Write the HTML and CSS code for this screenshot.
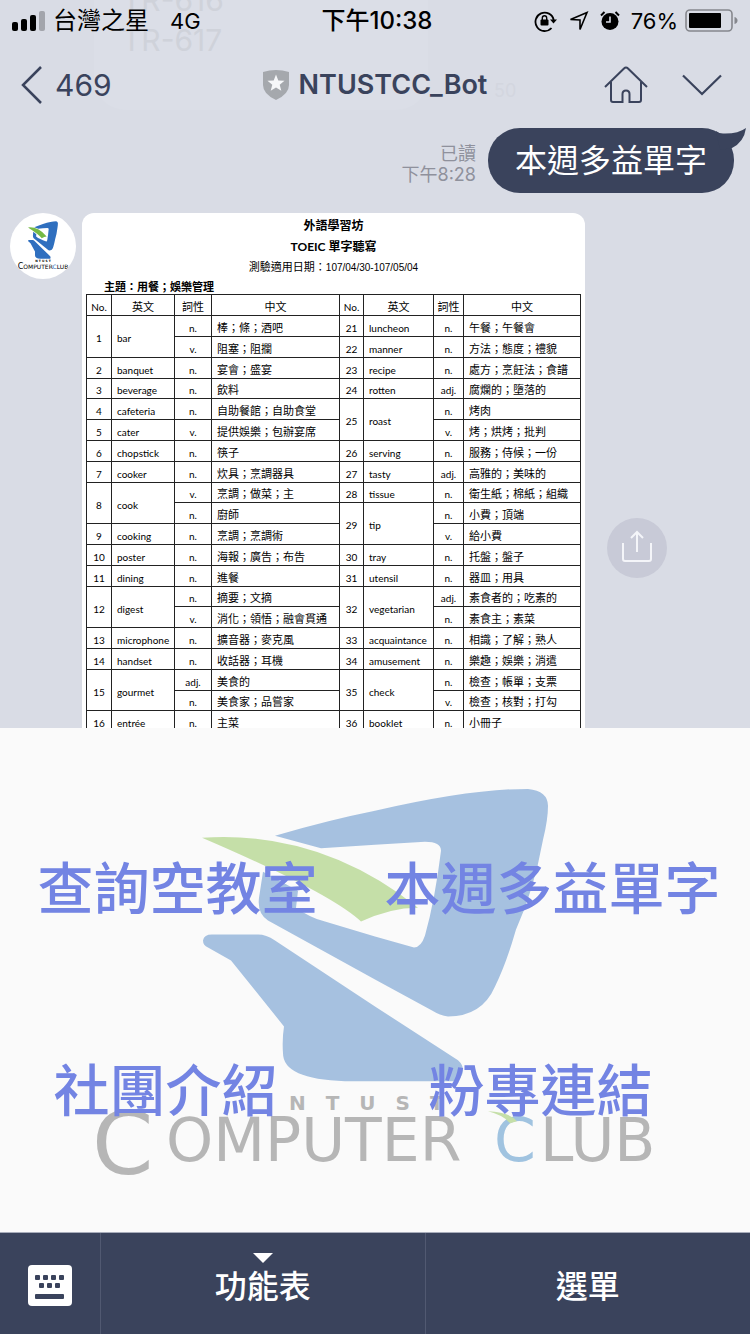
FILE: index.html
```html
<!DOCTYPE html>
<html lang="zh-Hant">
<head>
<meta charset="utf-8">
<meta name="viewport" content="width=device-width, initial-scale=1">
<title>NTUSTCC_Bot</title>
<link rel="stylesheet" href="styles.css">
</head>
<body>
<div class="app">
  <header class="top">
    <div class="ghost" aria-hidden="true">
      <span>TR-616</span>
      <span>TR-617</span>
    </div>
    <div class="ghost-time" aria-hidden="true">50</div>
    <div class="status">
      <div class="status-left">
        <svg class="signal" viewBox="0 0 34 20" aria-hidden="true">
          <rect x="0" y="11" width="6" height="9" rx="2"/>
          <rect x="9" y="8" width="6" height="12" rx="2"/>
          <rect x="18" y="4" width="6" height="16" rx="2"/>
          <rect x="27" y="0" width="6" height="20" rx="2" fill="#a3a5ac"/>
        </svg>
        <span>台灣之星</span>
        <span class="network">4G</span>
      </div>
      <div class="clock">下午10:38</div>
      <div class="status-right">
        <svg class="ico-lock" viewBox="0 0 24 22" aria-hidden="true">
          <path d="M17.500 18A9.200 9.200 0 1 1 19.700 10" fill="none" stroke="#000" stroke-width="1.800"/>
          <path d="M16 9.500h7l-3.500 4z"/>
          <rect x="6.500" y="9.500" width="8" height="6" rx="1"/>
          <path d="M8.300 10V8a2.200 2.200 0 0 1 4.400 0V10" fill="none" stroke="#000" stroke-width="1.400"/>
        </svg>
        <svg class="ico-loc" viewBox="0 0 20 20" aria-hidden="true">
          <path d="M1.500 8.500 18 1.500 11 18.500V9z" fill="none" stroke="#000" stroke-width="1.600"/>
        </svg>
        <svg class="ico-alarm" viewBox="0 0 20 20" aria-hidden="true">
          <circle cx="10" cy="10.500" r="8.500"/>
          <path d="M1 4.500 4.500 1M19 4.500 15.500 1" stroke="#000" stroke-width="2"/>
          <path d="M10 5.500v5.500H6" fill="none" stroke="#dadde6" stroke-width="1.600"/>
        </svg>
        <span class="percent">76%</span>
        <svg class="battery" viewBox="0 0 53 24" aria-hidden="true">
          <rect x="1" y="1" width="46" height="21" rx="4" fill="none" stroke="#85878d" stroke-width="1.600"/>
          <rect x="4" y="4" width="32" height="15" rx="1"/>
          <path d="M49.500 8q3 1 3 3.500t-3 3.500z" fill="#85878d"/>
        </svg>
      </div>
    </div>
    <nav class="nav">
      <button class="back" type="button">
        <svg viewBox="0 0 22 40" aria-hidden="true"><path d="M20 2 2 20l18 18" fill="none" stroke="#3a435c" stroke-width="2.500"/></svg>
        <span>469</span>
      </button>
      <h1 class="title">
        <svg viewBox="0 0 26 30" aria-hidden="true">
          <path d="M0 2Q13-2 26 2V15Q26 24 13 30 0 24 0 15Z" fill="#a5a8ad"/>
          <path d="M13 4.500l2.300 5.900 6.200.3-4.800 4 1.600 6.100L13 17.400l-5.300 3.400 1.600-6.100-4.800-4 6.200-.3z" fill="#f6f7f9"/>
        </svg>
        <span>NTUSTCC_Bot</span>
      </h1>
      <div class="actions">
        <button type="button" aria-label="主頁">
          <svg class="ico-home" viewBox="0 0 44 38" aria-hidden="true">
            <path d="M1 21 20 2.500q2-2 4 0L43 21M7 16v18q0 2 2 2h9.500V28q0-3.500 3.500-3.500t3.500 3.500v8H35q2 0 2-2V16" fill="none" stroke="#3a435c" stroke-width="2"/>
          </svg>
        </button>
        <button type="button" aria-label="展開選單">
          <svg class="ico-down" viewBox="0 0 40 22" aria-hidden="true"><path d="M1 1.500 20 20 39 1.500" fill="none" stroke="#3a435c" stroke-width="2.200"/></svg>
        </button>
      </div>
    </nav>
  </header>

  <main class="chat">
    <div class="sent">
      <div class="meta"><span>已讀</span><span>下午8:28</span></div>
      <div class="bubble">本週多益單字
        <svg class="tail" viewBox="0 0 30 24" aria-hidden="true"><path d="M0 3Q3 5.500 7 5.500 22 6 30 0 28 14 16 20L4 22Z" fill="#3a435c"/></svg>
      </div>
    </div>

    <div class="received">
      <div class="avatar">
        <svg class="avatar-mark" viewBox="202 788 347 295" preserveAspectRatio="none" aria-hidden="true"><use href="#mark"/></svg>
        <div class="avatar-ntust">N T U S T</div>
        <div class="avatar-name"><b>C</b>OMPUTER<i>C</i>LUB</div>
      </div>
      <article class="doc">
        <h2>外語學習坊</h2>
        <h2>TOEIC 單字聽寫</h2>
        <p class="dates">測驗適用日期：<span>107/04/30-107/05/04</span></p>
        <p class="topic">主題：用餐；娛樂管理</p>
        <table>
          <colgroup><col class="c1"><col class="c2"><col class="c3"><col class="c4"><col class="c5"><col class="c6"><col class="c7"><col class="c8"></colgroup>
          <tbody>
          <tr><th>No.</th><th class="h">英文</th><th class="h">詞性</th><th class="h">中文</th><th>No.</th><th class="h">英文</th><th class="h">詞性</th><th class="h">中文</th></tr>
          <tr><td rowspan="2">1</td><td rowspan="2" class="w">bar</td><td>n.</td><td class="z">棒；條；酒吧</td><td>21</td><td class="w">luncheon</td><td>n.</td><td class="z">午餐；午餐會</td></tr>
          <tr><td>v.</td><td class="z">阻塞；阻攔</td><td>22</td><td class="w">manner</td><td>n.</td><td class="z">方法；態度；禮貌</td></tr>
          <tr><td>2</td><td class="w">banquet</td><td>n.</td><td class="z">宴會；盛宴</td><td>23</td><td class="w">recipe</td><td>n.</td><td class="z">處方；烹飪法；食譜</td></tr>
          <tr><td>3</td><td class="w">beverage</td><td>n.</td><td class="z">飲料</td><td>24</td><td class="w">rotten</td><td>adj.</td><td class="z">腐爛的；墮落的</td></tr>
          <tr><td>4</td><td class="w">cafeteria</td><td>n.</td><td class="z">自助餐館；自助食堂</td><td rowspan="2">25</td><td rowspan="2" class="w">roast</td><td>n.</td><td class="z">烤肉</td></tr>
          <tr><td>5</td><td class="w">cater</td><td>v.</td><td class="z">提供娛樂；包辦宴席</td><td>v.</td><td class="z">烤；烘烤；批判</td></tr>
          <tr><td>6</td><td class="w">chopstick</td><td>n.</td><td class="z">筷子</td><td>26</td><td class="w">serving</td><td>n.</td><td class="z">服務；侍候；一份</td></tr>
          <tr><td>7</td><td class="w">cooker</td><td>n.</td><td class="z">炊具；烹調器具</td><td>27</td><td class="w">tasty</td><td>adj.</td><td class="z">高雅的；美味的</td></tr>
          <tr><td rowspan="2">8</td><td rowspan="2" class="w">cook</td><td>v.</td><td class="z">烹調；做菜；主</td><td>28</td><td class="w">tissue</td><td>n.</td><td class="z">衛生紙；棉紙；組織</td></tr>
          <tr><td>n.</td><td class="z">廚師</td><td rowspan="2">29</td><td rowspan="2" class="w">tip</td><td>n.</td><td class="z">小費；頂端</td></tr>
          <tr><td>9</td><td class="w">cooking</td><td>n.</td><td class="z">烹調；烹調術</td><td>v.</td><td class="z">給小費</td></tr>
          <tr><td>10</td><td class="w">poster</td><td>n.</td><td class="z">海報；廣告；布告</td><td>30</td><td class="w">tray</td><td>n.</td><td class="z">托盤；盤子</td></tr>
          <tr><td>11</td><td class="w">dining</td><td>n.</td><td class="z">進餐</td><td>31</td><td class="w">utensil</td><td>n.</td><td class="z">器皿；用具</td></tr>
          <tr><td rowspan="2">12</td><td rowspan="2" class="w">digest</td><td>n.</td><td class="z">摘要；文摘</td><td rowspan="2">32</td><td rowspan="2" class="w">vegetarian</td><td>adj.</td><td class="z">素食者的；吃素的</td></tr>
          <tr><td>v.</td><td class="z">消化；領悟；融會貫通</td><td>n.</td><td class="z">素食主；素菜</td></tr>
          <tr><td>13</td><td class="w">microphone</td><td>n.</td><td class="z">擴音器；麥克風</td><td>33</td><td class="w">acquaintance</td><td>n.</td><td class="z">相識；了解；熟人</td></tr>
          <tr><td>14</td><td class="w">handset</td><td>n.</td><td class="z">收話器；耳機</td><td>34</td><td class="w">amusement</td><td>n.</td><td class="z">樂趣；娛樂；消遣</td></tr>
          <tr><td rowspan="2">15</td><td rowspan="2" class="w">gourmet</td><td>adj.</td><td class="z">美食的</td><td rowspan="2">35</td><td rowspan="2" class="w">check</td><td>n.</td><td class="z">檢查；帳單；支票</td></tr>
          <tr><td>n.</td><td class="z">美食家；品嘗家</td><td>v.</td><td class="z">檢查；核對；打勾</td></tr>
          <tr><td>16</td><td class="w">entrée</td><td>n.</td><td class="z">主菜</td><td>36</td><td class="w">booklet</td><td>n.</td><td class="z">小冊子</td></tr>
          </tbody>
        </table>
      </article>
      <button class="share" type="button" aria-label="分享">
        <svg viewBox="0 0 30 32" aria-hidden="true"><path d="M1 13v16q0 2 2 2h24q2 0 2-2V13M15 22V2M9 8l6-6 6 6" fill="none" stroke="#f4f5f9" stroke-width="2"/></svg>
      </button>
    </div>
  </main>

  <section class="rich">
    <svg class="rich-logo" viewBox="0 728 750 505" preserveAspectRatio="none" aria-hidden="true">
      <defs>
        <g id="mark">
          <path class="mark-blue" d="M275 836 Q330 820 375 811 Q470 789 528 789 Q548 791 548 806 Q548 820 543 840 Q534 890 516 930 Q506 965 495 987 Q482 1017 448 1017 Q440 1016 432 1011 L375 980 L268 921 Q257 914 259 898 L263 872 L298 891 L296 908 Q310 918 325 922 L375 937 L414 948 Q421 948 425 936 Q435 900 441 851 Q441 842 425 842 L375 845 L321 848.500 Z"/>
          <path class="mark-green" d="M202 838 Q320 830 418 908 Q390 908 361 922 Q330 893 202 838 Z"/>
          <path class="mark-blue" d="M203 941 Q204 935 212 935 L258 935 Q266 935 275 941 L375 1007 L458 1061 Q468 1070 458 1082 L345 1082 Q283 1080 283 1054 Q282 1040 284 1027 L231 961 L208 948 Q203 946 203 941 Z"/>
        </g>
      </defs>
      <use href="#mark"/>
      <g class="logo-text">
        <text class="logo-ntust" x="289" y="1111">N&#8195;T&#8195;U&#8195;S&#8195;T</text>
        <text class="logo-cap" x="92" y="1175">C</text>
        <text x="166" y="1162">OMPUTER</text>
        <text class="logo-c" x="494" y="1162">C</text>
        <text x="540" y="1162">LUB</text>
      </g>
      <path class="mark-green" d="M488 1112q22 1 29 10l-7 2q-6-8-22-12z"/>
    </svg>
    <div class="rich-grid">
      <button type="button">查詢空教室</button>
      <button type="button">本週多益單字</button>
      <button class="low" type="button">社團介紹</button>
      <button class="low" type="button">粉專連結</button>
    </div>
  </section>

  <footer class="bar">
    <button class="kb" type="button" aria-label="鍵盤">
      <svg viewBox="0 0 44 41" aria-hidden="true">
        <rect width="44" height="41" rx="4" fill="#fff"/>
        <g fill="#3a435c">
          <rect x="7" y="10" width="5" height="5" rx="1"/><rect x="15" y="10" width="5" height="5" rx="1"/><rect x="23" y="10" width="5" height="5" rx="1"/><rect x="31" y="10" width="5" height="5" rx="1"/>
          <rect x="11" y="18" width="5" height="5" rx="1"/><rect x="19" y="18" width="5" height="5" rx="1"/><rect x="27" y="18" width="5" height="5" rx="1"/>
          <rect x="7" y="29" width="29" height="5" rx="1"/>
        </g>
      </svg>
    </button>
    <button class="tab" type="button">
      <svg class="caret" viewBox="0 0 20 10" aria-hidden="true"><path d="M0 0h20L10 10z" fill="#fff"/></svg>
      功能表
    </button>
    <button class="tab" type="button">選單</button>
  </footer>
</div>
</body>
</html>
```
FILE: styles.css
```css
* { box-sizing: border-box; }

body {
  margin: 0;
  font-family: Inter, "Noto Sans CJK TC", sans-serif;
  background: #d9dce5;
  color: #000;
}

button {
  margin: 0;
  padding: 0;
  border: 0;
  background: none;
  color: inherit;
  font: inherit;
  cursor: pointer;
}

svg { display: block; }

h1, h2, p { margin: 0; }

.app {
  display: flex;
  flex-direction: column;
  height: 100vh;
}

/* Header */
.top {
  position: relative;
  flex: none;
  overflow: hidden;
}

.ghost {
  position: absolute;
  top: 0;
  left: 94px;
  display: flex;
  flex-direction: column;
  justify-content: flex-end;
  width: 334px;
  height: 110px;
  padding: 0 0 50px 28px;
  border-radius: 0 0 32px 32px;
  background: #dbdee7;
  color: #cfd2da;
  font-size: 30px;
  line-height: 40px;
}

.ghost-time {
  position: absolute;
  top: 80px;
  left: 494px;
  color: #d3d6df;
  font-size: 18px;
}

.status {
  position: relative;
  display: grid;
  grid-template-columns: 1fr auto 1fr;
  align-items: center;
  height: 41px;
  padding: 0 12px;
  font-size: 24px;
  line-height: 40px;
}

.status-left,
.status-right {
  display: flex;
  align-items: center;
  gap: 7px;
}

.status-right { justify-content: flex-end; }
.signal { width: 34px; height: 20px; }
.network { margin-left: 14px; font-size: 22px; }
.clock { padding-left: 4px; font-size: 24px; font-weight: 500; }
.ico-lock { width: 24px; height: 22px; margin-right: 4px; }
.ico-loc { width: 20px; height: 20px; margin-right: 4px; }
.ico-alarm { width: 20px; height: 20px; margin-right: 4px; }
.percent { font-size: 22px; }
.battery { width: 53px; height: 24px; }

.nav {
  position: relative;
  display: grid;
  grid-template-columns: 1fr auto 1fr;
  align-items: center;
  height: 87px;
  padding: 0 28px 0 28px;
  color: #3a435c;
}

.back {
  display: flex;
  align-items: center;
  gap: 12px;
  margin-left: -7px;
  font-size: 30px;
  line-height: 40px;
}

.back svg { width: 22px; height: 40px; }

.title {
  display: flex;
  align-items: center;
  gap: 10px;
  font-size: 27px;
  font-weight: 600;
  line-height: 40px;
}

.title svg { width: 26px; height: 30px; }

.actions {
  display: flex;
  justify-content: flex-end;
  align-items: center;
  gap: 34px;
}

.ico-home { width: 44px; height: 38px; }
.ico-down { width: 40px; height: 22px; }

/* Conversation */
.chat {
  flex: 1;
  min-height: 0;
  overflow: hidden;
}

.sent {
  display: flex;
  justify-content: flex-end;
  align-items: center;
  gap: 12px;
  padding-right: 16px;
}

.meta {
  display: flex;
  flex-direction: column;
  align-items: flex-end;
  padding-top: 6px;
  color: #8f919c;
  font-size: 18px;
  line-height: 21px;
}

.bubble {
  position: relative;
  padding: 0 27px;
  border-radius: 32px;
  background: #3a435c;
  color: #fff;
  font-size: 32px;
  line-height: 65px;
}

.tail {
  position: absolute;
  top: 0;
  right: -12px;
  width: 30px;
  height: 24px;
}

.received {
  display: flex;
  align-items: flex-start;
  margin-top: 20px;
  padding: 0 10px;
}

.avatar {
  flex: none;
  display: flex;
  flex-direction: column;
  align-items: center;
  width: 66px;
  height: 66px;
  margin-right: 6px;
  padding-top: 8px;
  border-radius: 50%;
  background: #fff;
  overflow: hidden;
}

.avatar-mark {
  flex: none;
  width: 30px;
  height: 38px;
  --mark-blue: #2f6fbf;
  --mark-green: #76ba45;
}

.avatar-ntust { font: bold 3px/4px "DejaVu Sans", sans-serif; }
.avatar-name { font: 6px/8px "DejaVu Sans", sans-serif; white-space: nowrap; }
.avatar-name b { font-size: 8px; font-weight: 400; }
.avatar-name i { color: #2f6fbf; font-style: normal; }

.doc {
  flex: 0 1 503px;
  aspect-ratio: 3 / 4;
  padding: 2px 4px 0;
  border-radius: 12px;
  background: #fff;
  overflow: hidden;
}

.doc h2,
.dates {
  text-align: center;
  line-height: 21px;
}

.doc h2 { font: bold 12px/21px Lato, "Noto Sans CJK TC", sans-serif; }
.dates { font-size: 11px; }
.dates span { font: 10px "Liberation Sans", sans-serif; }
.topic { padding: 2px 0 0 18px; font-size: 11px; font-weight: 700; line-height: 14px; }

.doc table {
  width: 100%;
  table-layout: fixed;
  border-collapse: collapse;
  font: 10px/16px Lato, "Noto Sans CJK TC", sans-serif;
}

.doc tr { height: 21px; }
.doc tr:nth-child(5n) { height: 20px; }

.doc th,
.doc td {
  padding: 3px 0 0;
  border: 1px solid #222;
  font-weight: 400;
  text-align: center;
  white-space: nowrap;
}

.doc .h { font-size: 11px; }
.doc .w { padding-left: 5px; text-align: left; }
.doc .z { padding-left: 5px; text-align: left; font-size: 11px; }

.c1 { width: 25px; }
.c2 { width: 63px; }
.c3 { width: 37px; }
.c4 { width: 128px; }
.c5 { width: 24px; }
.c6 { width: 70px; }
.c7 { width: 30px; }
.c8 { width: 117px; }

.share {
  flex: none;
  align-self: center;
  display: flex;
  justify-content: center;
  align-items: center;
  width: 60px;
  height: 60px;
  margin-left: 22px;
  padding-bottom: 4px;
  border-radius: 50%;
  background: #c8cad7;
}

.share svg { width: 30px; height: 32px; }

/* Rich menu */
.rich {
  position: relative;
  flex: none;
  aspect-ratio: 750 / 504;
  background: #fafafa;
  --mark-blue: #a6c1e0;
  --mark-green: #c5dfa8;
}

.mark-blue { fill: var(--mark-blue); }
.mark-green { fill: var(--mark-green); }

.rich-logo {
  position: absolute;
  inset: 0;
  width: 100%;
  height: 100%;
}

.logo-text {
  fill: #b6b6b6;
  font-family: "DejaVu Sans", sans-serif;
  font-size: 60px;
}

.logo-text .logo-ntust { font-size: 20px; font-weight: 700; }
.logo-text .logo-cap { font-size: 88px; }
.logo-text .logo-c { fill: #a0c3e0; }

.rich-grid {
  position: relative;
  display: grid;
  grid-template: 1fr 1fr / 1fr 1fr;
  height: 100%;
  padding: 60px 0 40px;
  color: #7384e3;
  font-size: 56px;
  font-weight: 500;
  line-height: 64px;
}

.rich-grid button { padding-right: 20px; white-space: nowrap; }
.rich-grid .low { padding-right: 44px; }

/* Bottom bar */
.bar {
  flex: none;
  display: grid;
  grid-template-columns: 101px 1fr 1fr;
  height: 102px;
  border-top: 1px solid #a8adbb;
  background: #3a435c;
  color: #fff;
  font-size: 32px;
  font-weight: 500;
}

.bar button { border-right: 1px solid #515971; }
.bar button:last-child { border-right: 0; }

.kb {
  display: flex;
  justify-content: center;
  align-items: center;
  padding-top: 4px;
}

.kb svg { width: 44px; height: 41px; }
.tab { position: relative; }

.caret {
  position: absolute;
  top: 20px;
  left: calc(50% - 10px);
  width: 20px;
  height: 10px;
}
```
